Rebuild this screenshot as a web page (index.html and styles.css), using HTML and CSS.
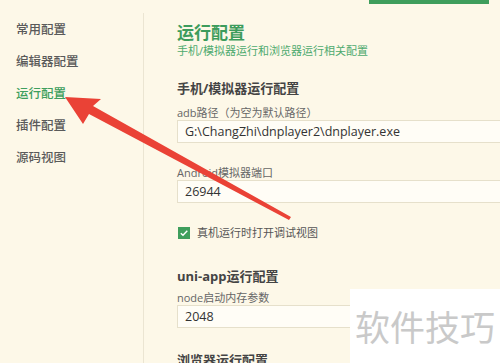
FILE: index.html
```html
<!DOCTYPE html>
<html lang="zh-CN">
<head>
  <meta charset="UTF-8">
  <title>运行配置</title>
  <link rel="stylesheet" href="styles.css">
</head>
<body>
  <div class="topbar">
    <span class="top-title">设置 - HBuilder X</span>
    <span class="top-button">Settings.json</span>
  </div>

  <div class="settings">
    <ul class="sidebar">
      <li>常用配置</li>
      <li>编辑器配置</li>
      <li class="active">运行配置</li>
      <li>插件配置</li>
      <li>源码视图</li>
    </ul>

    <div class="content">
      <h1 class="page-title">运行配置</h1>
      <p class="page-desc">手机/模拟器运行和浏览器运行相关配置</p>

      <h2 class="section-title first">手机/模拟器运行配置</h2>
      <label class="field-label">adb路径（为空为默认路径）</label>
      <div class="input">G:\ChangZhi\dnplayer2\dnplayer.exe</div>

      <label class="field-label spaced">Android模拟器端口</label>
      <div class="input">26944</div>

      <div class="check-row">
        <span class="checkbox">
          <svg viewBox="0 0 12 12" width="12" height="12"><path d="M2.8 6.2 L5 8.3 L9.3 3.8" fill="none" stroke="#fff" stroke-width="1.4"/></svg>
        </span>
        <span>真机运行时打开调试视图</span>
      </div>

      <h2 class="section-title">uni-app运行配置</h2>
      <label class="field-label tight">node启动内存参数</label>
      <div class="input">2048</div>

      <h2 class="section-title last">浏览器运行配置</h2>
    </div>
  </div>

  <svg class="arrow" width="500" height="363" viewBox="0 0 500 363">
    <polygon points="65,97 101,99 93,106 291,217 289,220 89,114 83,124" fill="#ea4236"/>
  </svg>

  <div class="watermark">软件技巧</div>
</body>
</html>
```

FILE: styles.css
```css
body {
  margin: 0;
  width: 500px;
  height: 363px;
  overflow: hidden;
  background-color: #fdf8e8;
  font-family: "Open Sans", "Noto Sans CJK SC", sans-serif;
  color: #555;
  position: relative;
}

.topbar {
  height: 4px;
  overflow: hidden;
  position: relative;
}

.top-title {
  position: absolute;
  left: 34px;
  top: -16px;
  font-size: 14px;
  line-height: 18px;
  color: #555;
}

.top-button {
  position: absolute;
  left: 369px;
  top: -20px;
  width: 120px;
  height: 24px;
  background-color: #3f9e5c;
  color: #fff;
  font-size: 12px;
  text-align: center;
  line-height: 22px;
}

.settings {
  display: flex;
  margin-top: 9px;
}

.sidebar {
  list-style: none;
  margin: 0;
  padding: 1px 0 0 0;
  width: 143px;
  height: 360px;
  border-right: 1px solid #ebe5d2;
}

.sidebar li {
  padding-left: 16px;
  font-size: 12.5px;
  line-height: 32px;
  font-weight: 500;
  color: #5a5a5a;
}

.sidebar li.active {
  color: #3e9f5e;
}

.content {
  padding-left: 33px;
  flex: 1;
  overflow: hidden;
}

.page-title {
  margin: 9px 0 0 0;
  font-size: 17px;
  line-height: 22px;
  font-weight: bold;
  color: #3d9c5c;
}

.page-desc {
  margin: 0;
  font-size: 11px;
  line-height: 14px;
  color: #4eaa6e;
}

.section-title {
  margin: 25px 0 0 0;
  font-size: 13px;
  line-height: 20px;
  font-weight: bold;
  color: #444;
}

.section-title.first {
  margin-top: 20px;
}

.section-title.last {
  margin-top: 22px;
}

.field-label {
  display: block;
  margin-top: 8px;
  font-size: 11px;
  line-height: 14px;
  color: #666;
}

.field-label.spaced {
  margin-top: 23px;
}

.field-label.tight {
  margin-top: 5px;
}

.input {
  box-sizing: border-box;
  width: 400px;
  height: 23px;
  padding-left: 7px;
  background-color: #fffdf6;
  border: 1px solid #e6e0cb;
  font-size: 12.5px;
  line-height: 21px;
  color: #333;
}

.check-row {
  display: flex;
  align-items: center;
  gap: 7px;
  margin-top: 22px;
  padding-left: 1px;
  font-size: 11px;
  line-height: 16px;
  color: #555;
}

.checkbox {
  display: flex;
  width: 12px;
  height: 12px;
  background-color: #3f9e5c;
}

.arrow {
  position: absolute;
  left: 0;
  top: 0;
}

.watermark {
  position: absolute;
  left: 350px;
  top: 289px;
  width: 150px;
  height: 74px;
  background-color: #fff;
  color: #c9c9c9;
  font-family: "Noto Sans CJK SC", sans-serif;
  font-size: 35px;
  line-height: 74px;
  padding-left: 5px;
  box-sizing: border-box;
}
```
